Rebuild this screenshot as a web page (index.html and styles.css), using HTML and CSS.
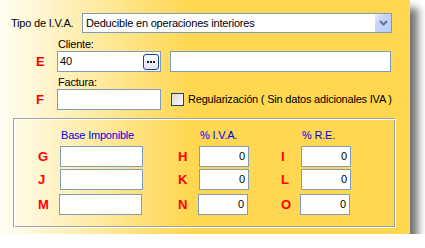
FILE: index.html
```html
<!DOCTYPE html>
<html lang="es">
<head>
<meta charset="utf-8">
<title>Tipo de I.V.A.</title>
<link rel="stylesheet" href="styles.css">
</head>
<body>
<div class="panel">
  <div class="tipo-row">
    <span class="tipo-label">Tipo de I.V.A.</span>
    <div class="combo">
      <span class="combo-text">Deducible en operaciones interiores</span>
      <span class="combo-btn"><svg width="9" height="6" viewBox="0 0 9 6"><path d="M1 1 L4.5 4.5 L8 1" fill="none" stroke="#6b7285" stroke-width="2"/></svg></span>
    </div>
  </div>
  <div class="caption">Cliente:</div>
  <div class="field-row">
    <span class="key">E</span>
    <div class="box box-code"><span class="val">40</span><span class="dots"><i></i><i></i><i></i></span></div>
    <div class="box box-name"></div>
  </div>
  <div class="caption caption-factura">Factura:</div>
  <div class="field-row">
    <span class="key">F</span>
    <div class="box box-code"></div>
    <div class="check"><span class="check-box"></span><span class="check-text">Regularización ( Sin datos adicionales IVA )</span></div>
  </div>
  <div class="group">
    <div class="grid">
      <span></span><span class="head">Base Imponible</span><span></span><span class="head">% I.V.A.</span><span></span><span class="head">% R.E.</span>

      <span class="key">G</span><div class="box base"></div><span class="key k2">H</span><div class="box num">0</div><span class="key k3">I</span><div class="box num">0</div>

      <span class="key">J</span><div class="box base"></div><span class="key k2">K</span><div class="box num">0</div><span class="key k3">L</span><div class="box num">0</div>

      <span class="key r3">M</span><div class="box base r3"></div><span class="key k2 r3">N</span><div class="box num r3">0</div><span class="key k3 r3">O</span><div class="box num r3">0</div>
    </div>
  </div>
</div>
</body>
</html>
```
FILE: styles.css
```css
body {
  margin: 0;
  background: #fff;
  font: 11px/13px "Liberation Sans", Arial, sans-serif;
  letter-spacing: -0.2px;
  color: #000;
}

.panel {
  width: 410px;
  height: 234px;
  box-sizing: border-box;
  padding-top: 13px;
  background: linear-gradient(to right, #fffef4 0px, #ffd750 190px, #ffd750 100%);
  box-shadow: 8px 8px 8px rgba(0, 0, 0, 0.55);
}

.tipo-row {
  display: flex;
  align-items: center;
  padding-left: 11px;
  height: 20px;
}

.tipo-label {
  width: 71px;
}

.combo {
  width: 310px;
  height: 20px;
  box-sizing: border-box;
  border: 1px solid #7f9db9;
  background: #fff;
  display: flex;
  align-items: center;
  padding-left: 3px;
}

.combo-text {
  flex: 1;
}

.combo-btn {
  width: 16px;
  height: 18px;
  display: flex;
  align-items: center;
  justify-content: center;
  background: linear-gradient(135deg, #e6ecfe 0%, #c4d4fc 35%, #b9ccf8 100%);
}

.caption {
  margin-top: 5px;
  padding-left: 58px;
  height: 13px;
}

.caption-factura {
  margin-top: 4px;
}

.field-row {
  display: flex;
  align-items: center;
  padding-left: 36px;
  height: 21px;
}

.key {
  width: 21px;
  color: #f00;
  font: bold 13px/15px "Liberation Sans", Arial, sans-serif;
  letter-spacing: 0;
}

.box {
  box-sizing: border-box;
  height: 21px;
  border: 1px solid #7f9db9;
  background: #fff;
}

.box-code {
  width: 104px;
  display: flex;
  align-items: center;
  padding-left: 2px;
}

.box-name {
  width: 221px;
  margin-left: 9px;
}

.dots {
  margin-left: auto;
  margin-right: 1px;
  width: 16px;
  height: 16px;
  box-sizing: border-box;
  border: 1px solid #22408e;
  border-radius: 3px;
  background: linear-gradient(#ffffff, #e2e4ee);
  display: flex;
  align-items: center;
  justify-content: center;
  gap: 1px;
}

.dots i {
  width: 2px;
  height: 2px;
  background: #1a1c3c;
}

.check {
  display: flex;
  align-items: center;
  margin-left: 10px;
  gap: 4px;
}

.check-box {
  width: 13px;
  height: 13px;
  box-sizing: border-box;
  border: 1px solid #1c3f8a;
  background: linear-gradient(135deg, #d8d8d2 0%, #f2f2ef 70%, #ffffff 100%);
}

.group {
  margin: 8px 0 0 13px;
  width: 383px;
  height: 110px;
  box-sizing: border-box;
  border: 1px solid;
  border-color: #a0a0a0 #ffffff #ffffff #a0a0a0;
  box-shadow: inset 1px 1px 0 #fff, inset -1px -1px 0 #a0a0a0;
  padding: 10px 0 0 24px;
}

.grid {
  display: grid;
  grid-template-columns: 22px 83px 56px 50px 52px 50px;
  grid-template-rows: 15px 21px 21px 23px;
  row-gap: 2px;
  align-items: center;
}

.head {
  align-self: start;
  color: #0000f0;
  padding-left: 1px;
}

.k2 {
  width: auto;
  padding-left: 35px;
}

.k3 {
  width: auto;
  padding-left: 32px;
}

.base {
  width: 83px;
}

.num {
  width: 50px;
  text-align: right;
  padding-right: 3px;
  line-height: 19px;
}

.r3 {
  align-self: end;
  margin-left: -1px;
}

.key.r3 {
  align-self: center;
  margin-top: 2px;
  margin-left: 0;
}
```
